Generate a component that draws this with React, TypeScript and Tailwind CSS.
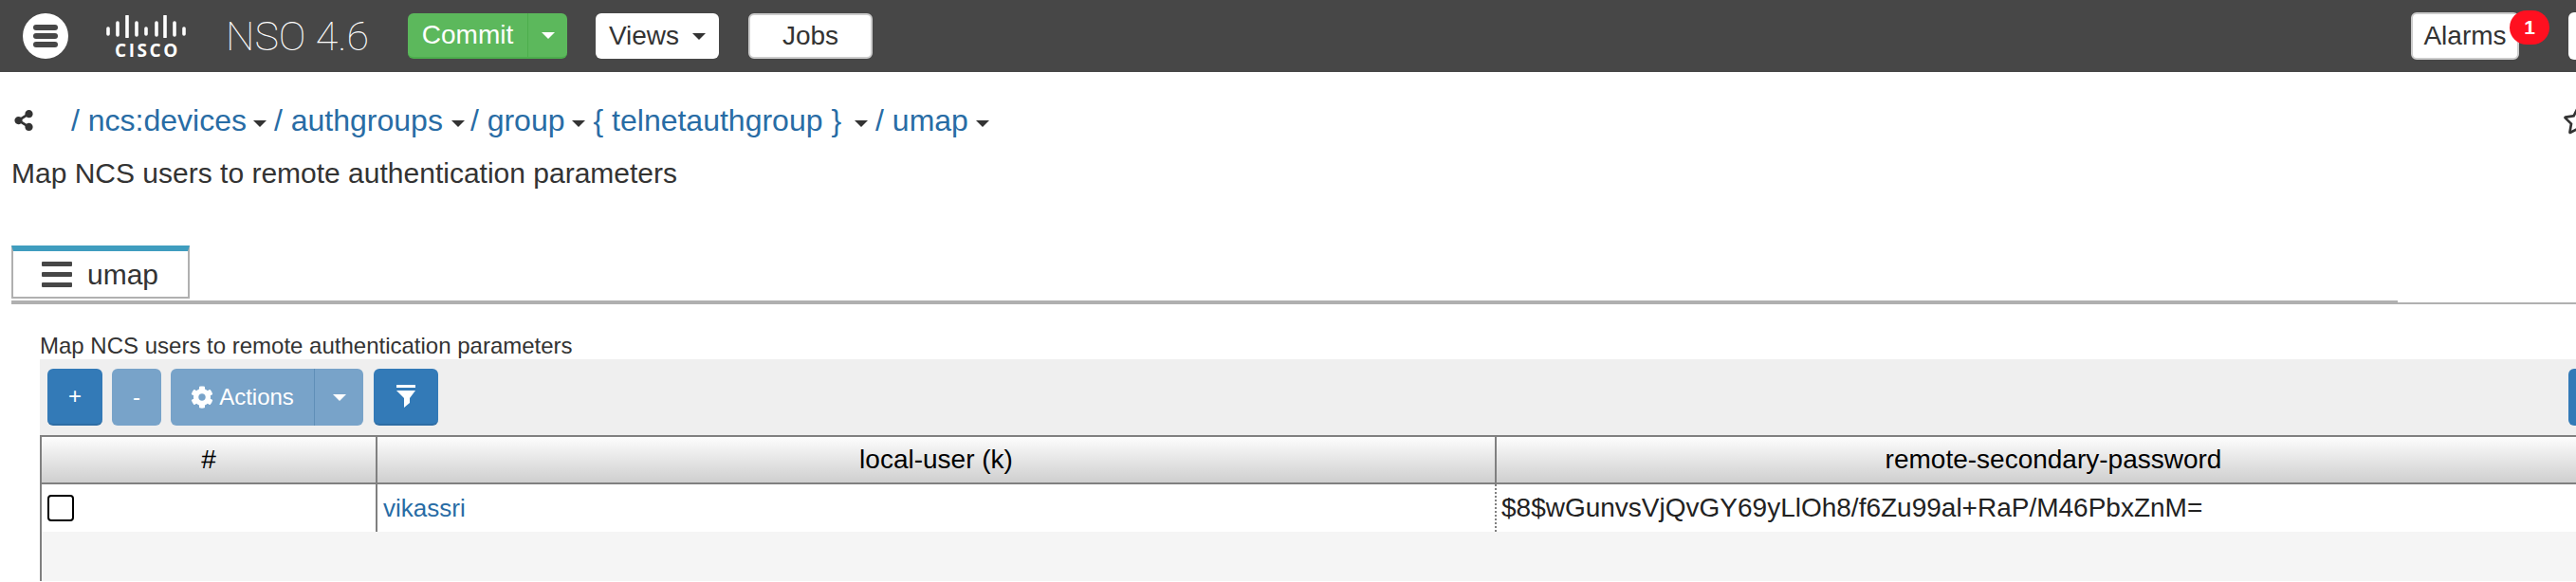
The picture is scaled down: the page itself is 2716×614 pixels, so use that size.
import { FaCog, FaRegStar, FaShareAlt } from "react-icons/fa";

const crumbs = [
  { label: "/ ncs:devices", gap: "ml-[7px] mr-[8px]" },
  { label: "/ authgroups", gap: "ml-[9px] mr-[6px]" },
  { label: "/ group", gap: "ml-[7px] mr-[9px]" },
  { label: "{ telnetauthgroup }", gap: "ml-[14px] mr-[8px]" },
  { label: "/ umap", gap: "ml-[8px] mr-[8px]" },
];

function Caret({ className }: { className: string }) {
  return (
    <span
      className={`inline-block h-0 w-0 border-x-[7px] border-t-[7px] border-x-transparent ${className}`}
    />
  );
}

function CiscoLogo() {
  const bars = [
    [2, 26, 32],
    [12, 20, 33],
    [22, 13, 35],
    [32, 20, 33],
    [42, 26, 32],
    [53, 20, 33],
    [62, 13, 35],
    [72, 20, 33],
    [82, 26, 32],
  ];
  return (
    <div className="ml-[40px] flex w-[84px] flex-col items-center">
      <svg width="84" height="24" viewBox="0 12 84 24">
        {bars.map(([x, a, b]) => (
          <line
            key={x}
            x1={x}
            x2={x}
            y1={a}
            y2={b}
            stroke="white"
            strokeWidth="3.6"
            strokeLinecap="round"
          />
        ))}
      </svg>
      <span className="mt-[5px] pl-[3px] font-['Open_Sans'] text-[19px] leading-[16px] font-bold tracking-[2.6px] text-white">
        CISCO
      </span>
    </div>
  );
}

function TopBar() {
  return (
    <div className="flex h-[76px] items-center bg-[#474747] pl-[24px]">
      <div className="flex h-[48px] w-[48px] flex-col items-center justify-center gap-[3px] rounded-full bg-white">
        <span className="h-[6px] w-[26px] rounded-full bg-[#474747]" />
        <span className="h-[6px] w-[26px] rounded-full bg-[#474747]" />
        <span className="h-[6px] w-[26px] rounded-full bg-[#474747]" />
      </div>
      <CiscoLogo />
      <span className="ml-[42px] w-[150px] font-['Roboto'] text-[43px] font-thin whitespace-nowrap text-white">
        NSO 4.6
      </span>
      <div className="ml-[42px] flex h-[48px] w-[168px] rounded-[6px] border-b-2 border-[#4cae4c] bg-[#5cb85c] text-[28px] text-white">
        <span className="flex w-[126px] items-center justify-center">Commit</span>
        <span className="flex flex-1 items-center justify-center border-l border-[#4cae4c]">
          <Caret className="border-t-white" />
        </span>
      </div>
      <div className="ml-[30px] flex h-[48px] w-[130px] items-center justify-center gap-[14px] rounded-[6px] bg-white text-[28px] text-[#333]">
        Views
        <Caret className="border-t-[#333]" />
      </div>
      <div className="ml-[31px] flex h-[48px] w-[131px] items-center justify-center rounded-[6px] border-2 border-[#ccc] bg-white text-[28px] text-[#333]">
        Jobs
      </div>
      <div className="relative ml-[1622px] flex h-[50px] w-[114px] items-center justify-center rounded-[6px] border-2 border-[#ccc] bg-white text-[28px] text-[#333]">
        Alarms
        <span className="absolute top-[-4px] left-[102px] flex h-[36px] w-[42px] items-center justify-center rounded-[18px] bg-[#ff1020] text-[21px] font-bold text-white">
          1
        </span>
      </div>
      <div className="ml-[52px] h-[50px] w-[60px] rounded-[6px] bg-white" />
    </div>
  );
}

function Breadcrumb() {
  return (
    <div className="mt-[28px] flex h-[46px] items-center pl-[14px] text-[32px] text-[#286ca5]">
      <FaShareAlt className="h-[22px] w-[22px] text-[#333]" />
      <div className="ml-[39px] flex items-center">
        {crumbs.map((c) => (
          <div key={c.label} className="flex items-center">
            <span className="whitespace-pre">{c.label}</span>
            <Caret className={`${c.gap} mt-[6px] border-t-[#333]`} />
          </div>
        ))}
      </div>
      <FaRegStar className="absolute left-[2702px] h-[30px] w-[32px] text-[#333]" />
    </div>
  );
}

function Tab() {
  return (
    <div className="ml-[12px] flex h-[56px] w-[188px] items-center gap-[16px] border-x-2 border-t-[6px] border-b-2 border-x-[#b0b0b0] border-t-[#3f9dbf] border-b-[#b0b0b0] pl-[30px] text-[30px] text-[#333]">
      <div className="flex w-[32px] flex-col gap-[6px]">
        <span className="h-[5px] rounded-[1px] bg-[#474747]" />
        <span className="h-[5px] rounded-[1px] bg-[#474747]" />
        <span className="h-[5px] rounded-[1px] bg-[#474747]" />
      </div>
      umap
    </div>
  );
}

function Toolbar() {
  return (
    <div className="flex h-[80px] items-center bg-[#efefef] pl-[8px] text-[24px] text-white">
      <div className="flex h-[60px] w-[58px] items-center justify-center rounded-[6px] border-b-2 border-[#2e6da4] bg-[#337ab7]">
        +
      </div>
      <div className="ml-[10px] flex h-[60px] w-[52px] items-center justify-center rounded-[6px] bg-[#78a3c9]">
        -
      </div>
      <div className="ml-[10px] flex h-[60px] w-[203px] rounded-[6px] bg-[#78a3c9]">
        <span className="flex w-[152px] items-center justify-center gap-[6px] border-r border-[#5f8fb8]">
          <FaCog className="h-[24px] w-[24px]" />
          Actions
        </span>
        <span className="flex flex-1 items-center justify-center">
          <Caret className="border-t-white" />
        </span>
      </div>
      <div className="ml-[11px] flex h-[60px] w-[68px] items-center justify-center rounded-[6px] border-b-2 border-[#2e6da4] bg-[#337ab7]">
        <svg width="20" height="24" viewBox="0 0 20 24" fill="white">
          <rect x="0" y="0" width="20" height="3" />
          <path d="M0 6H20L14 14V19L8 24V14Z" />
        </svg>
      </div>
      <div className="ml-[2246px] h-[60px] w-[60px] rounded-[6px] bg-[#337ab7]" />
    </div>
  );
}

function Table() {
  return (
    <div className="h-[154px] border-l-2 border-[#808080] bg-[#f5f5f5] text-[28px]">
      <div className="flex h-[52px] border-y-2 border-[#808080] bg-gradient-to-b from-[#fdfdfd] to-[#cfcfcf] text-black">
        <div className="flex w-[354px] items-center justify-center border-r-2 border-[#808080]">#</div>
        <div className="flex w-[1180px] items-center justify-center border-r-2 border-[#808080]">
          local-user (k)
        </div>
        <div className="flex w-[1174px] items-center justify-center">remote-secondary-password</div>
      </div>
      <div className="flex h-[50px] bg-white">
        <div className="flex w-[354px] items-center border-r-2 border-[#808080] pl-[6px]">
          <span className="h-[28px] w-[28px] rounded-[4px] border-2 border-black" />
        </div>
        <div className="flex w-[1180px] items-center border-r-2 border-dotted border-[#808080] pl-[6px] text-[26px] text-[#286ca5]">
          vikassri
        </div>
        <div className="flex items-center pl-[5px] text-[#222]">$8$wGunvsVjQvGY69yLlOh8/f6Zu99al+RaP/M46PbxZnM=</div>
      </div>
    </div>
  );
}

export default function App() {
  return (
    <div className="h-[614px] w-[2716px] overflow-hidden bg-white font-['Liberation_Sans',sans-serif]">
      <div className="w-[2790px]">
        <TopBar />
        <Breadcrumb />
        <p className="mt-[10px] pl-[12px] text-[30px] leading-[46px] text-[#333]">
          Map NCS users to remote authentication parameters
        </p>
        <div className="mt-[53px]">
          <Tab />
        </div>
        <div className="mt-[2px] flex items-end">
          <div className="ml-[12px] h-[4px] w-[2516px] bg-[#b0b0b0]" />
          <div className="h-[2px] flex-1 bg-[#b0b0b0]" />
        </div>
        <div className="mt-[30px] pl-[42px]">
          <p className="h-[28px] text-[24px] leading-[28px] text-[#333]">
            Map NCS users to remote authentication parameters
          </p>
          <Toolbar />
          <Table />
        </div>
      </div>
    </div>
  );
}
